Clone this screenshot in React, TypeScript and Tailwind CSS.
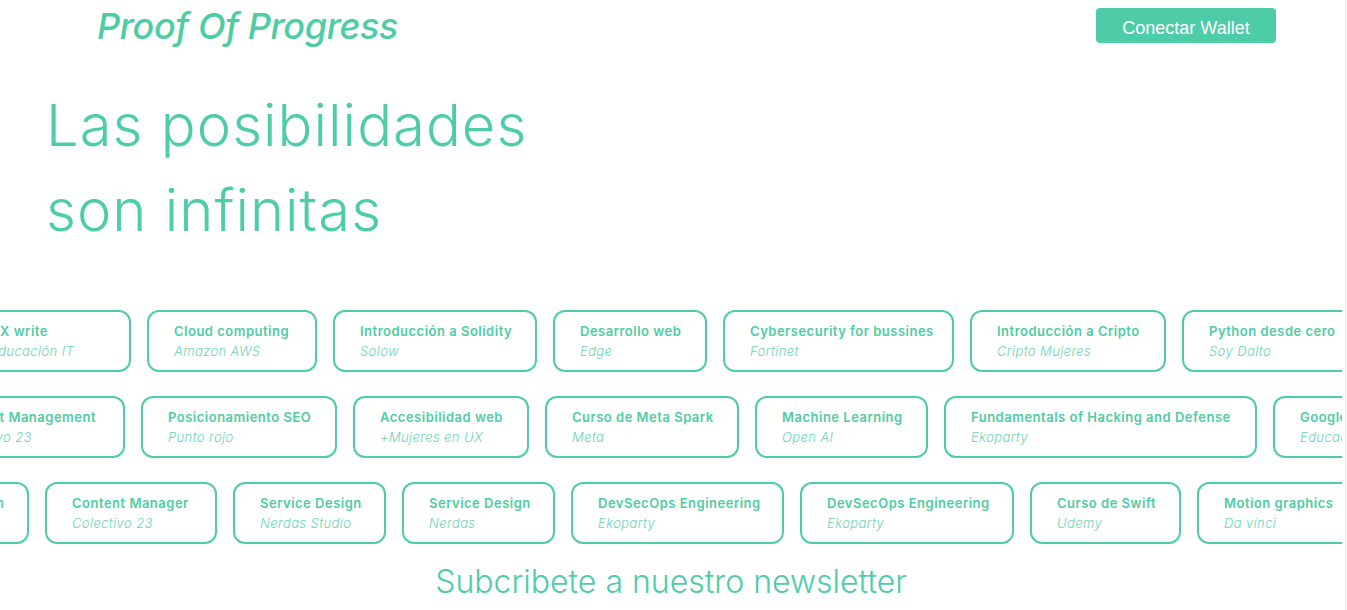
import React from 'react';

type Course = { title: string; org: string; w: number };

const rows: { offset: number; cards: Course[] }[] = [
  {
    offset: -37,
    cards: [
      { title: 'UX write', org: 'Educación IT', w: 168 },
      { title: 'Cloud computing', org: 'Amazon AWS', w: 170 },
      { title: 'Introducción a Solidity', org: 'Solow', w: 204 },
      { title: 'Desarrollo web', org: 'Edge', w: 154 },
      { title: 'Cybersecurity for bussines', org: 'Fortinet', w: 231 },
      { title: 'Introducción a Cripto', org: 'Cripto Mujeres', w: 196 },
      { title: 'Python desde cero', org: 'Soy Dalto', w: 178 },
    ],
  },
  {
    offset: -76,
    cards: [
      { title: 'Content Management', org: 'Colectivo 23', w: 201 },
      { title: 'Posicionamiento SEO', org: 'Punto rojo', w: 196 },
      { title: 'Accesibilidad web', org: '+Mujeres en UX', w: 176 },
      { title: 'Curso de Meta Spark', org: 'Meta', w: 194 },
      { title: 'Machine Learning', org: 'Open AI', w: 173 },
      { title: 'Fundamentals of Hacking and Defense', org: 'Ekoparty', w: 313 },
      { title: 'Google Analytics', org: 'Educación IT', w: 190 },
    ],
  },
  {
    offset: -126,
    cards: [
      { title: 'Product Design', org: 'Platzi', w: 155 },
      { title: 'Content Manager', org: 'Colectivo 23', w: 172 },
      { title: 'Service Design', org: 'Nerdas Studio', w: 153 },
      { title: 'Service Design', org: 'Nerdas', w: 153 },
      { title: 'DevSecOps Engineering', org: 'Ekoparty', w: 213 },
      { title: 'DevSecOps Engineering', org: 'Ekoparty', w: 214 },
      { title: 'Curso de Swift', org: 'Udemy', w: 151 },
      { title: 'Motion graphics', org: 'Da vinci', w: 162 },
    ],
  },
];

const CourseCard: React.FC<{ course: Course }> = ({ course }) => (
  <div
    className="h-[62px] shrink-0 rounded-[12px] border-2 border-[#4ecca9] pl-[25px] flex flex-col justify-center"
    style={{ width: course.w }}
  >
    <span className="text-[13px] leading-[20px] font-semibold tracking-[0.5px] text-[#4ecca3] whitespace-nowrap">
      {course.title}
    </span>
    <span className="text-[13px] leading-[20px] italic font-light tracking-[0.4px] text-[#6cd3b5] whitespace-nowrap">
      {course.org}
    </span>
  </div>
);

export default function App() {
  return (
    <div className="flex bg-white h-[610px] overflow-hidden font-['Inter',sans-serif]">
      <div className="w-[1342px] shrink-0 overflow-hidden">
        {/* Navbar */}
        <header className="flex items-center justify-between pl-[97px] pr-[66px] h-[52px]">
          <h1 className="text-[36px] font-medium italic text-[#4ecca3] tracking-[-0.4px]">Proof Of Progress</h1>
          <button className="bg-[#4ecca8] text-white rounded-[4px] h-[35px] w-[180px] pt-[5px] text-[18px] font-['Liberation_Sans',sans-serif] mb-[1px]">
            Conectar Wallet
          </button>
        </header>

        {/* Hero */}
        <section className="pl-[46px] mt-[31px]">
          <h2 className="text-[58px] leading-[85px] font-light text-[#4ecca9] tracking-[1px]">
            Las posibilidades
            <br />
            son infinitas
          </h2>
        </section>

        {/* Courses */}
        <div className="mt-[57px] flex flex-col gap-[24px]">
          {rows.map((row, i) => (
            <div key={i} className="flex gap-4" style={{ marginLeft: row.offset }}>
              {row.cards.map((c, j) => (
                <CourseCard key={j} course={c} />
              ))}
            </div>
          ))}
        </div>

        <p className="text-center mt-[14px] text-[32px] font-light text-[#4ecca9]">Subcribete a nuestro newsletter</p>
      </div>
      <div className="flex-1 border-l border-[#ececec] ml-[3px]" />
    </div>
  );
}
